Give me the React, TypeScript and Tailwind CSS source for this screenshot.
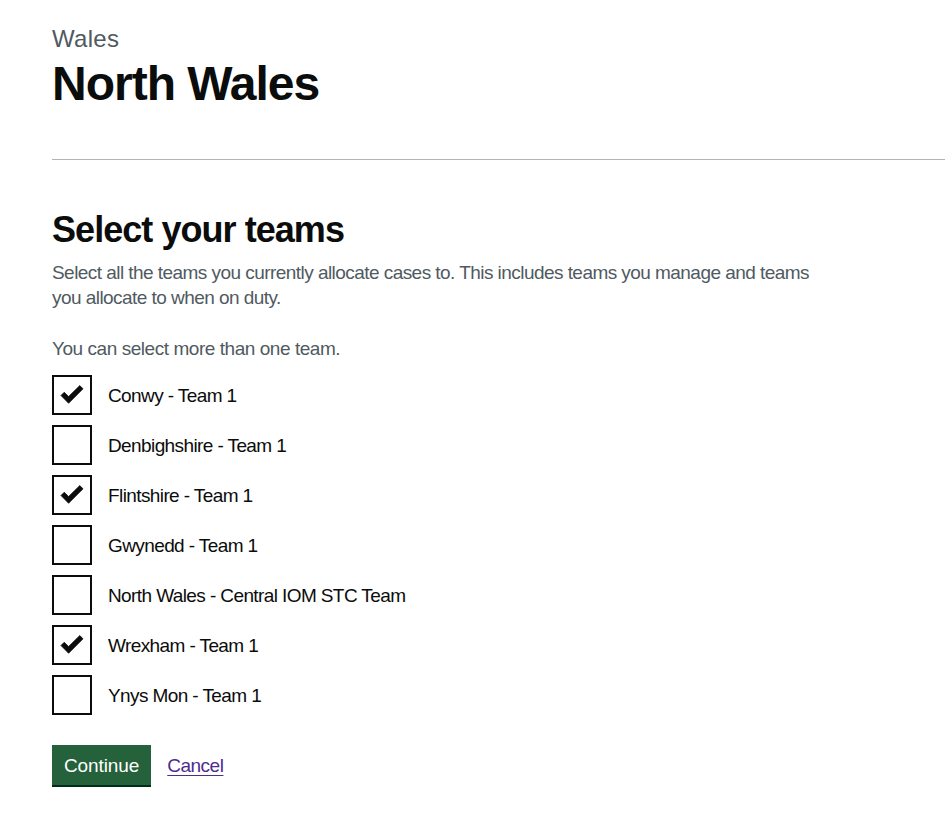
import React, { useState } from 'react';

const teams = [
  { name: 'Conwy - Team 1', checked: true },
  { name: 'Denbighshire - Team 1', checked: false },
  { name: 'Flintshire - Team 1', checked: true },
  { name: 'Gwynedd - Team 1', checked: false },
  { name: 'North Wales - Central IOM STC Team', checked: false },
  { name: 'Wrexham - Team 1', checked: true },
  { name: 'Ynys Mon - Team 1', checked: false },
];

const Tick = () => (
  <svg width="24" height="19" viewBox="0 0 24 19" className="block">
    <path
      d="M1 10.5 L4.2 7.3 L8.6 11.6 L19.8 0.6 L23 3.8 L8.6 18.2 Z"
      fill="#0b0c0c"
      stroke="#0b0c0c"
      strokeWidth="0.8"
      strokeLinejoin="round"
    />
  </svg>
);

const App: React.FC = () => {
  const [selected, setSelected] = useState<boolean[]>(teams.map(t => t.checked));

  const toggle = (i: number) =>
    setSelected(prev => prev.map((v, idx) => (idx === i ? !v : v)));

  return (
    <div className="min-h-screen bg-white text-[#0b0c0c] font-['Liberation_Sans',Arial,sans-serif]">
      <div className="pl-[52px] pt-6">
        <span className="block text-[24px] leading-[30px] text-[#505a5f] tracking-[0.3px]">Wales</span>
        <h1 className="mt-[5px] text-[48px] leading-[50px] font-bold tracking-[-1px]">North Wales</h1>

        <hr className="mt-[50px] border-0 border-t border-[#b1b4b6]" />

        <h2 className="mt-[50px] text-[36px] leading-[40px] font-bold tracking-[-0.95px]">Select your teams</h2>
        <p className="mt-[10px] max-w-[780px] text-[19px] leading-[25px] text-[#505a5f] tracking-[-0.55px]">
          Select all the teams you currently allocate cases to. This includes teams you manage and teams you allocate to when on duty.
        </p>
        <p className="mt-[26px] text-[19px] leading-[25px] text-[#505a5f] tracking-[-0.45px]">You can select more than one team.</p>

        <div className="mt-[14px] flex flex-col gap-[10px]">
          {teams.map((t, i) => (
            <label key={t.name} className="flex items-center gap-4 cursor-pointer" onClick={() => toggle(i)}>
              <span className="flex h-10 w-10 shrink-0 items-center justify-center border-2 border-[#0b0c0c] bg-white">
                {selected[i] && (
                  <span className="mt-[-2px] ml-[-1px]">
                    <Tick />
                  </span>
                )}
              </span>
              <span className="text-[19px] leading-[25px] tracking-[-0.6px]">{t.name}</span>
            </label>
          ))}
        </div>

        <div className="mt-[30px] flex items-center gap-4">
          <button className="h-10 bg-[#25613a] px-3 text-[19px] leading-[25px] text-white tracking-[-0.1px] shadow-[0_2px_0_#002d18]">
            Continue
          </button>
          <a href="#" className="text-[19px] leading-[25px] text-[#4c2c92] tracking-[-0.5px] underline underline-offset-[3px]">
            Cancel
          </a>
        </div>
      </div>
    </div>
  );
};

export default App;
